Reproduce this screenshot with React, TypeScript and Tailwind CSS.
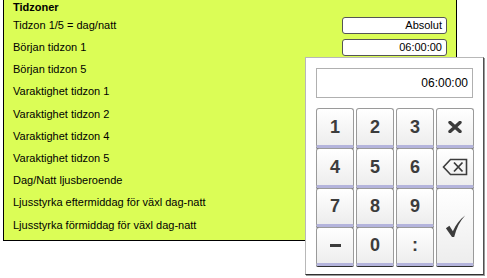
const rows = [
  { label: 'Tidzon 1/5 = dag/natt', value: 'Absolut' },
  { label: 'Början tidzon 1', value: '06:00:00' },
  { label: 'Början tidzon 5' },
  { label: 'Varaktighet tidzon 1' },
  { label: 'Varaktighet tidzon 2' },
  { label: 'Varaktighet tidzon 4' },
  { label: 'Varaktighet tidzon 5' },
  { label: 'Dag/Natt ljusberoende' },
  { label: 'Ljusstyrka eftermiddag för växl dag-natt' },
  { label: 'Ljusstyrka förmiddag för växl dag-natt' },
];

function Key({ children, tall }: { children: React.ReactNode; tall?: boolean }) {
  return (
    <button
      className={`${tall ? 'row-span-2' : ''} flex items-center justify-center rounded-t-[3px] rounded-b-[2px] border border-[#9a9a9a] border-b-[3px] border-b-[#b4b4dc] bg-gradient-to-b from-white to-[#ededed] text-[18px] font-bold text-[#3c3c3c] shadow-[0_1px_0_#303030]`}
    >
      {children}
    </button>
  );
}

export default function App() {
  return (
    <div className="relative w-[487px] h-[278px] overflow-hidden bg-white" style={{ fontFamily: '"Liberation Sans", Arial, sans-serif' }}>
      {/* Panel */}
      <div className="ml-[3px] w-[454px] h-[241px] border-x border-b border-black bg-[#dbfd56] pl-[9px]">
        <div className="h-[14px] text-[11px] font-bold leading-[14px] text-black">Tidzoner</div>
        {rows.map(r => (
          <div key={r.label} className="flex h-[22.2px] items-center justify-between pr-[9px] text-[11px] text-black">
            <span>{r.label}</span>
            {r.value && (
              <span className="flex h-[17px] w-[105px] items-center justify-end rounded-[3px] border border-[#555] bg-white pr-[4px]">
                {r.value}
              </span>
            )}
          </div>
        ))}
      </div>

      {/* Keypad popup */}
      <div className="absolute left-[305px] top-[57px] w-[179px] h-[218px] border border-[#b8b8b8] border-r-[#505050] border-b-[#303030] bg-white shadow-[1px_1px_0_#9a9a9a] px-[10px] pt-[10px]">
        <div className="flex h-[30px] items-center justify-end border border-[#b0b0b0] pr-[4px] text-[12px] text-black">
          06:00:00
        </div>
        <div className="mt-[10px] grid grid-cols-[38px_38px_38px_38px] grid-rows-[40px_40px_39px_39px] gap-x-[2px]">
          <Key>1</Key>
          <Key>2</Key>
          <Key>3</Key>
          <Key>
            <svg width="14" height="12" viewBox="0 0 14 12">
              <path d="M2 1.5 L12 10.5 M12 1.5 L2 10.5" stroke="#3c3c3c" strokeWidth="3.4" strokeLinecap="round" fill="none" />
            </svg>
          </Key>
          <Key>4</Key>
          <Key>5</Key>
          <Key>6</Key>
          <Key>
            <svg width="26" height="18" viewBox="0 0 26 18">
              <path d="M1.5 9 L8.5 1.5 H24.5 V16.5 H8.5 Z" stroke="#3c3c3c" strokeWidth="1.6" fill="none" strokeLinejoin="miter" />
              <path d="M12 4.5 L20.5 13.5 M20.5 4.5 L12 13.5" stroke="#3c3c3c" strokeWidth="1.8" fill="none" />
            </svg>
          </Key>
          <Key>7</Key>
          <Key>8</Key>
          <Key>9</Key>
          <Key tall>
            <svg width="21" height="23" viewBox="0 0 24 26">
              <path d="M1 15 L5 12 L9 18.5 C12.5 11 16.5 5 23 0.5 C17 7 13 15 10.5 25 L8 25 Z" fill="#3c3c3c" />
            </svg>
          </Key>
          <Key><span className="block h-[3px] w-[11px] bg-[#3c3c3c]" /></Key>
          <Key>0</Key>
          <Key>:</Key>
        </div>
      </div>
    </div>
  );
}
